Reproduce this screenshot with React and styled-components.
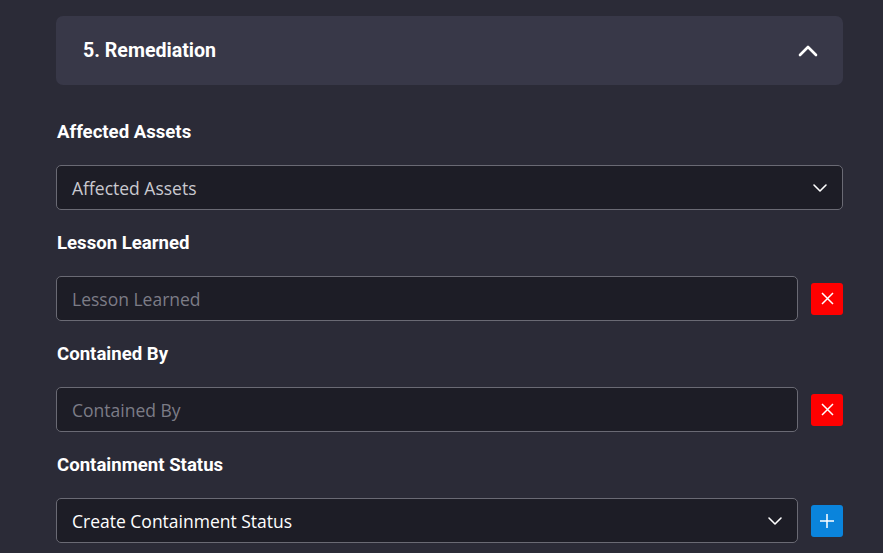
import styled, { createGlobalStyle } from "styled-components";

const GlobalStyle = createGlobalStyle`
  html, body {
    margin: 0;
    padding: 0;
    background: #2b2b37;
  }
  * {
    box-sizing: border-box;
  }
`;

const Page = styled.div`
  width: 883px;
  height: 553px;
  overflow: hidden;
  padding: 16px 40px 0 56px;
  background: #2b2b37;
`;

const SectionHeader = styled.div`
  height: 69px;
  background: #383848;
  border-radius: 7px;
  display: flex;
  align-items: center;
  justify-content: space-between;
  padding: 0 25px 0 27px;
  margin-bottom: 36px;
`;

const SectionTitle = styled.h2`
  margin: 0;
  font-family: Roboto, "Liberation Sans", sans-serif;
  font-weight: 700;
  font-size: 19.6px;
  color: #ffffff;
`;

const Label = styled.div`
  font-family: Roboto, "Liberation Sans", sans-serif;
  font-weight: 700;
  font-size: 18.6px;
  line-height: 22px;
  color: #ffffff;
  margin: 0 0 22px 1px;
`;

const Row = styled.div`
  display: flex;
  align-items: center;
  gap: 13px;
  margin-bottom: 22px;
`;

const Field = styled.div`
  flex: 1;
  height: 45px;
  background: #1d1d26;
  border: 1px solid #6a6a74;
  border-radius: 5px;
  display: flex;
  align-items: center;
  justify-content: space-between;
  padding: 0 14px 0 15px;
  font-family: "Open Sans", "Noto Sans", sans-serif;
  font-size: 17.5px;
  color: ${(p) => p.color || "#d4d4da"};
`;

const SquareButton = styled.button`
  width: 32px;
  height: 32px;
  border: none;
  border-radius: 3px;
  background: ${(p) => p.bg};
  display: flex;
  align-items: center;
  justify-content: center;
  padding: 0;
`;

const Chevron = ({ up }) =>
  up ? (
    <svg width="20" height="20" viewBox="0 0 20 20" fill="none">
      <path
        d="M2 14 L10 6 L18 14"
        stroke="#ffffff"
        strokeWidth="2.6"
        strokeLinecap="round"
        strokeLinejoin="round"
      />
    </svg>
  ) : (
    <svg width="16" height="16" viewBox="0 0 16 16" fill="none">
      <path
        d="M2 5 L8 11 L14 5"
        stroke="#ffffff"
        strokeWidth="1.6"
        strokeLinecap="round"
        strokeLinejoin="round"
      />
    </svg>
  );

const CrossIcon = () => (
  <svg width="15" height="15" viewBox="0 0 15 15">
    <path d="M2 2 L13 13 M13 2 L2 13" stroke="#ffffff" strokeWidth="1.5" />
  </svg>
);

const PlusIcon = () => (
  <svg width="16" height="16" viewBox="0 0 16 16">
    <path d="M8 1 V15 M1 8 H15" stroke="#ffffff" strokeWidth="1.5" />
  </svg>
);

export default function App() {
  return (
    <>
      <GlobalStyle />
      <Page>
        <SectionHeader>
          <SectionTitle>5. Remediation</SectionTitle>
          <Chevron up />
        </SectionHeader>

        <Label>Affected Assets</Label>
        <Row>
          <Field color="#c9c9d0">
            Affected Assets
            <Chevron />
          </Field>
        </Row>

        <Label>Lesson Learned</Label>
        <Row>
          <Field color="#7c7c86">Lesson Learned</Field>
          <SquareButton bg="#ff0000">
            <CrossIcon />
          </SquareButton>
        </Row>

        <Label>Contained By</Label>
        <Row>
          <Field color="#7c7c86">Contained By</Field>
          <SquareButton bg="#ff0000">
            <CrossIcon />
          </SquareButton>
        </Row>

        <Label>Containment Status</Label>
        <Row>
          <Field color="#ffffff">
            Create Containment Status
            <Chevron />
          </Field>
          <SquareButton bg="#0a84dc">
            <PlusIcon />
          </SquareButton>
        </Row>
      </Page>
    </>
  );
}
